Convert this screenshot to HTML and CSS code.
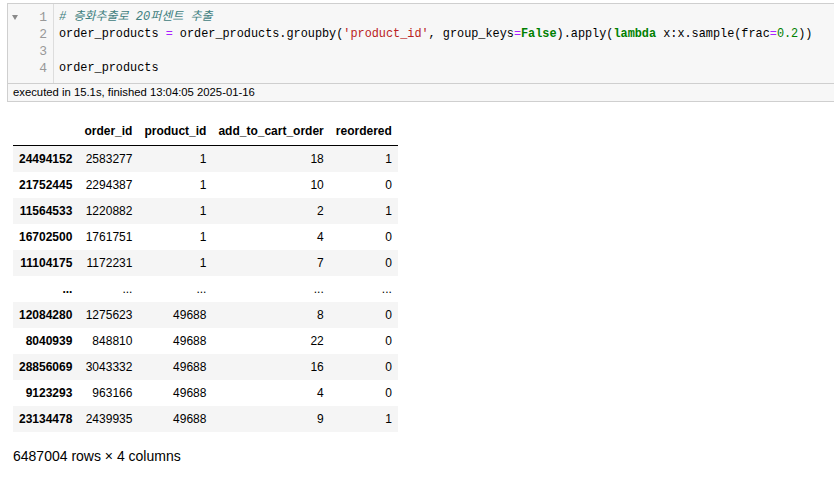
FILE: index.html
```html
<!DOCTYPE html>
<html>
<head>
<meta charset="utf-8">
<link rel="stylesheet" href="styles.css">
</head>
<body>
<div class="cell">
  <div class="input">
    <div class="gutter">
      <span class="fold"></span>
      <div class="ln">1</div>
      <div class="ln">2</div>
      <div class="ln">3</div>
      <div class="ln">4</div>
    </div>
    <div class="code">
      <div class="line"><span class="cm"># 층화추출로 20퍼센트 추출</span></div>
      <div class="line">order_products <span class="op">=</span> order_products.groupby(<span class="st">'product_id'</span>, group_keys<span class="op">=</span><span class="kw">False</span>).apply(<span class="kw">lambda</span> x:x.sample(frac<span class="op">=</span><span class="nu">0.2</span>))</div>
      <div class="line">&nbsp;</div>
      <div class="line">order_products</div>
    </div>
  </div>
  <div class="timing">executed in 15.1s, finished 13:04:05 2025-01-16</div>
</div>
<div class="output">
  <table class="df">
    <thead>
      <tr><th></th><th>order_id</th><th>product_id</th><th>add_to_cart_order</th><th>reordered</th></tr>
    </thead>
    <tbody>
      <tr><th>24494152</th><td>2583277</td><td>1</td><td>18</td><td>1</td></tr>
      <tr><th>21752445</th><td>2294387</td><td>1</td><td>10</td><td>0</td></tr>
      <tr><th>11564533</th><td>1220882</td><td>1</td><td>2</td><td>1</td></tr>
      <tr><th>16702500</th><td>1761751</td><td>1</td><td>4</td><td>0</td></tr>
      <tr><th>11104175</th><td>1172231</td><td>1</td><td>7</td><td>0</td></tr>
      <tr><th>...</th><td>...</td><td>...</td><td>...</td><td>...</td></tr>
      <tr><th>12084280</th><td>1275623</td><td>49688</td><td>8</td><td>0</td></tr>
      <tr><th>8040939</th><td>848810</td><td>49688</td><td>22</td><td>0</td></tr>
      <tr><th>28856069</th><td>3043332</td><td>49688</td><td>16</td><td>0</td></tr>
      <tr><th>9123293</th><td>963166</td><td>49688</td><td>4</td><td>0</td></tr>
      <tr><th>23134478</th><td>2439935</td><td>49688</td><td>9</td><td>1</td></tr>
    </tbody>
  </table>
  <p class="shape">6487004 rows × 4 columns</p>
</div>
</body>
</html>
```

FILE: styles.css
```css
html, body {
  margin: 0;
  overflow: hidden;
  background: #fff;
}
body {
  padding: 3px 0 0 7px;
  font-family: "Liberation Sans", Arial, sans-serif;
  color: #000;
}
.cell {
  border: 1px solid #cfcfcf;
  border-right: none;
  background: #f7f7f7;
  margin-right: -20px;
}
.input {
  display: flex;
  border-bottom: 1px solid #cfcfcf;
}
.gutter {
  position: relative;
  width: 39px;
  flex: none;
  border-right: 1px solid #ddd;
  padding: 5px 6px 6px 0;
  text-align: right;
  font-family: "Liberation Mono", "DejaVu Sans Mono", monospace;
  font-size: 13px;
  color: #999;
}
.fold {
  position: absolute;
  left: 4px;
  top: 11px;
  width: 0;
  height: 0;
  border-left: 3px solid transparent;
  border-right: 3px solid transparent;
  border-top: 5px solid #8a8a8a;
}
.ln, .line {
  height: 17px;
  line-height: 17px;
}
.code {
  padding: 5px 0 6px 5px;
  font-family: "Liberation Mono", "Noto Sans Mono CJK KR", "Noto Sans CJK KR", monospace;
  font-size: 11.85px;
  color: #000;
}
.line { white-space: pre; }
.cm { color: #408080; font-style: italic; font-size: 12px; }
.op { color: #aa22ff; }
.st { color: #ba2121; }
.kw { color: #008000; font-weight: bold; }
.nu { color: #008000; }
.timing {
  height: 17px;
  line-height: 17px;
  padding-left: 5px;
  font-size: 11.3px;
  background: #f7f7f7;
}
.output {
  padding: 16px 0 0 6px;
}
.df {
  border-collapse: collapse;
  border-spacing: 0;
  font-size: 12px;
}
.df th, .df td {
  padding: 6px 6px;
  line-height: 14px;
  text-align: right;
  white-space: nowrap;
}
.df thead th {
  font-weight: bold;
  padding-bottom: 7px;
  border-bottom: 1px solid #000;
}
.df tbody th {
  font-weight: bold;
}
.df tbody tr:nth-child(odd) {
  background: #f5f5f5;
}
.shape {
  margin: 16px 0 0 0;
  font-size: 14px;
}
```
